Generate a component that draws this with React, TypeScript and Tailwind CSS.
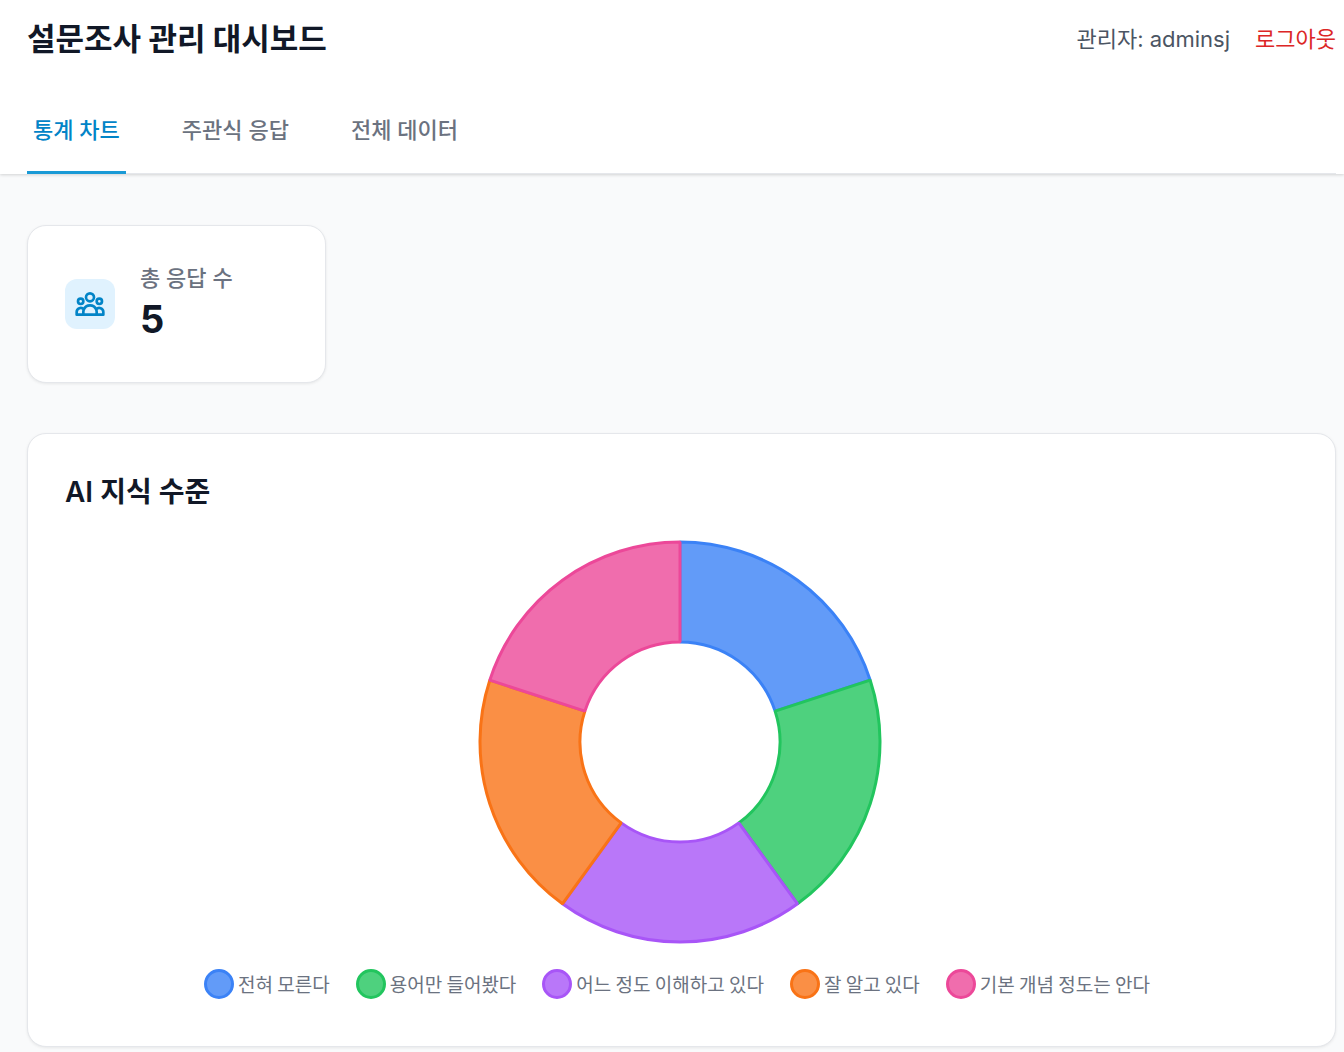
import { useState } from "react";

const slices = [
  { label: "전혀 모른다", value: 1, color: "#3b82f6", fill: "#629bf8" },
  { label: "용어만 들어봤다", value: 1, color: "#22c55e", fill: "#4ed17e" },
  { label: "어느 정도 이해하고 있다", value: 1, color: "#a855f7", fill: "#b977f9" },
  { label: "잘 알고 있다", value: 1, color: "#f97316", fill: "#fa8f45" },
  { label: "기본 개념 정도는 안다", value: 1, color: "#ec4899", fill: "#f06dad" },
];

const tabs = ["통계 차트", "주관식 응답", "전체 데이터"];

const CENTER = 202;
const OUTER = 200;
const INNER = 100;

function point(radius: number, turn: number) {
  const angle = turn * 2 * Math.PI - Math.PI / 2;
  return `${CENTER + radius * Math.cos(angle)} ${CENTER + radius * Math.sin(angle)}`;
}

function slicePath(from: number, to: number) {
  const large = to - from > 0.5 ? 1 : 0;
  return [
    `M${point(OUTER, from)}`,
    `A${OUTER} ${OUTER} 0 ${large} 1 ${point(OUTER, to)}`,
    `L${point(INNER, to)}`,
    `A${INNER} ${INNER} 0 ${large} 0 ${point(INNER, from)}`,
    "Z",
  ].join(" ");
}

function Doughnut() {
  const total = slices.reduce((sum, s) => sum + s.value, 0);
  let start = 0;
  return (
    <svg width="404" height="404" viewBox="0 0 404 404" role="img" aria-label="AI 지식 수준">
      {slices.map((s) => {
        const from = start;
        start += s.value / total;
        return (
          <path
            key={s.label}
            d={slicePath(from, start)}
            fill={s.fill}
            stroke={s.color}
            strokeWidth="3"
            strokeLinejoin="bevel"
          />
        );
      })}
    </svg>
  );
}

function Legend() {
  return (
    <ul className="mt-[25px] flex flex-wrap justify-center gap-x-[26px] gap-y-2 pr-[6px] font-['Noto_Sans_CJK_KR',sans-serif]">
      {slices.map((s) => (
        <li key={s.label} className="flex items-center gap-1 text-[19px] leading-[30px] text-[#6b7280]">
          <svg width="30" height="30" viewBox="0 0 30 30" aria-hidden="true">
            <circle cx="15" cy="15" r="13.5" fill={s.fill} stroke={s.color} strokeWidth="3" />
          </svg>
          {s.label}
        </li>
      ))}
    </ul>
  );
}

function UsersIcon() {
  return (
    <svg
      className="size-8 text-[#0284c7]"
      viewBox="0 0 24 24"
      fill="none"
      stroke="currentColor"
      strokeWidth="2"
      strokeLinecap="round"
      strokeLinejoin="round"
      aria-hidden="true"
    >
      <path d="M17 20h5v-2a3 3 0 00-5.356-1.857M17 20H7m10 0v-2c0-.656-.126-1.283-.356-1.857M7 20H2v-2a3 3 0 015.356-1.857M7 20v-2c0-.656.126-1.283.356-1.857m0 0a5.002 5.002 0 019.288 0M15 7a3 3 0 11-6 0 3 3 0 016 0zm6 3a2 2 0 11-4 0 2 2 0 014 0zM7 10a2 2 0 11-4 0 2 2 0 014 0z" />
    </svg>
  );
}

export default function App() {
  const [active, setActive] = useState(0);
  return (
    <div className="min-h-screen bg-[#f9fafb] pb-[5px] font-['Inter','Noto_Sans_CJK_KR',sans-serif] text-[#111827]">
      <header className="bg-white pr-2 pl-[27px] shadow-[0_1px_3px_rgba(0,0,0,0.16)]">
        <div className="flex h-[78px] items-center justify-between">
          <h1 className="text-[31px] leading-[44px] font-bold">설문조사 관리 대시보드</h1>
          <div className="flex items-center gap-[25px] text-[22px] leading-[31px]">
            <span className="text-[#4b5563]">관리자: adminsj</span>
            <button type="button" className="cursor-pointer text-[#dc2626]">
              로그아웃
            </button>
          </div>
        </div>
        <nav className="mt-3 flex gap-[50px] border-b border-[#e5e7eb]">
          {tabs.map((tab, i) => (
            <button
              key={tab}
              type="button"
              onClick={() => setActive(i)}
              aria-current={i === active ? "page" : undefined}
              className={
                i === active
                  ? "-mb-px cursor-pointer border-b-3 border-[#1a9ad6] px-[6px] py-[25px] text-[22px] leading-[31px] font-medium text-[#0284c7]"
                  : "-mb-px cursor-pointer border-b-3 border-transparent px-[6px] py-[25px] text-[22px] leading-[31px] font-medium text-[#6b7280]"
              }
            >
              {tab}
            </button>
          ))}
        </nav>
      </header>

      <main className="flex flex-col gap-[50px] pt-[51px] pr-2 pl-[27px]">
        <div className="grid grid-cols-4 gap-[38px]">
          <section className="flex items-center gap-[25px] rounded-[19px] border border-[#e5e7eb] bg-white p-[37px] shadow-[0_1px_3px_rgba(0,0,0,0.08)]">
            <div className="flex size-[50px] shrink-0 items-center justify-center rounded-xl bg-[#e0f2fe]">
              <UsersIcon />
            </div>
            <div>
              <p className="text-[22px] leading-[31px] font-medium text-[#6b7280]">총 응답 수</p>
              <p className="text-[38px] leading-[51px] font-bold">5</p>
            </div>
          </section>
        </div>

        <section className="rounded-[19px] border border-[#e5e7eb] bg-white p-[37px] shadow-[0_1px_3px_rgba(0,0,0,0.08)]">
          <h2 className="text-[28px] leading-[42px] font-semibold">AI 지식 수준</h2>
          <div className="mt-[27px] pr-[3px] pb-[10px]">
            <div className="flex justify-center">
              <Doughnut />
            </div>
            <Legend />
          </div>
        </section>
      </main>
    </div>
  );
}
